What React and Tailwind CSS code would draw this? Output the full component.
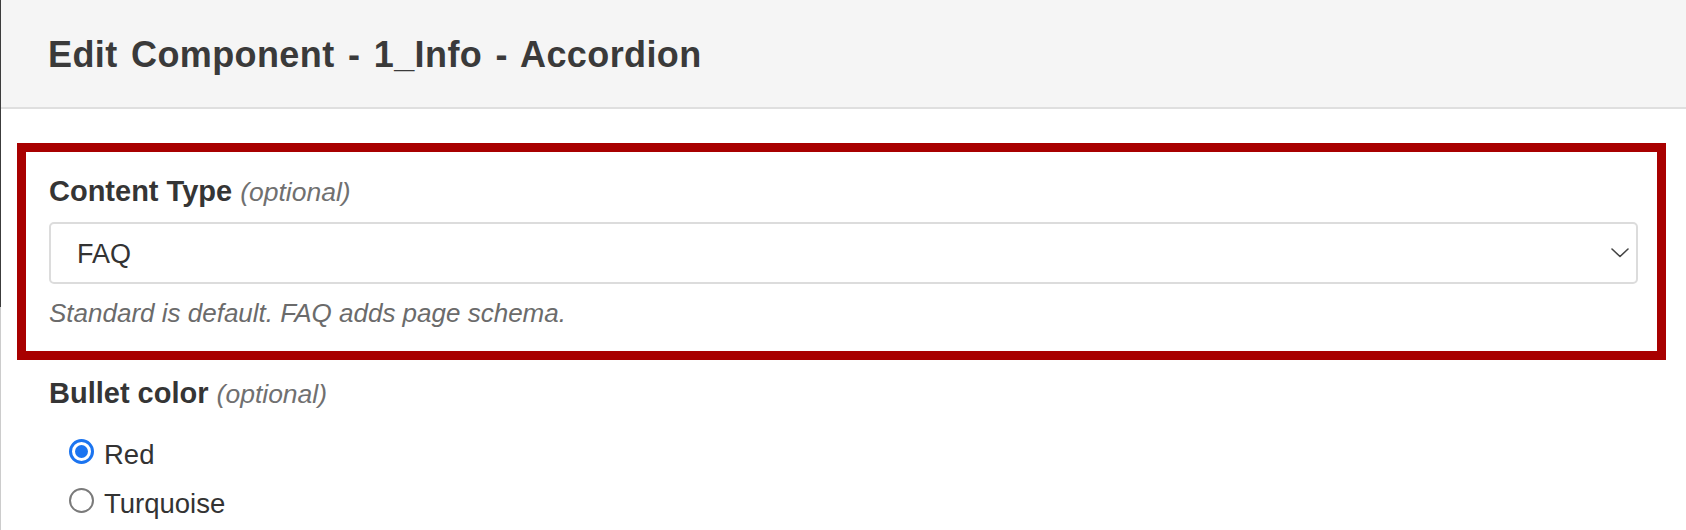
import React from 'react';

function Radio({ checked }) {
  if (checked) {
    return (
      <span className="flex items-center justify-center w-[25px] h-[25px] rounded-full border-[3px] border-[#1b74f0] bg-white shrink-0">
        <span className="w-[13px] h-[13px] rounded-full bg-[#1b74f0]" />
      </span>
    );
  }
  return <span className="w-[25px] h-[25px] rounded-full border-2 border-[#7a7a7a] bg-white shrink-0" />;
}

export default function App() {
  const options = [
    { label: "Red", checked: true },
    { label: "Turquoise", checked: false },
  ];

  return (
    <div className="w-[1686px] h-[530px] overflow-hidden bg-white flex font-['Liberation_Sans',Arial,sans-serif] text-[#353535]">
      {/* left window edge */}
      <div className="w-px flex flex-col shrink-0">
        <div className="h-[307px] bg-[#3c3c3c]" />
        <div className="flex-1 bg-[#cccccc]" />
      </div>

      <div className="flex-1 flex flex-col">
        <div className="h-[109px] shrink-0 bg-[#f5f5f5] border-b-2 border-[#dfdfdf] flex items-center pl-[47px] pt-[2px]">
          <h1 className="text-[36px] leading-[40px] font-bold text-[#3a3a3a] tracking-[0.4px] [word-spacing:3px]">
            Edit Component - 1_Info - Accordion
          </h1>
        </div>

        <div className="mt-[34px] ml-[16px] mr-[20px] border-[9px] border-[#a80000] pt-[23px] pb-[23px] pl-[23px] pr-[19px]">
          <label className="block text-[29px] leading-[32px] font-bold text-[#353535] mb-[14px]">
            Content Type <span className="font-normal italic text-[26.5px] text-[#707070]">(optional)</span>
          </label>
          <div className="h-[62px] border-2 border-[#dcdcdc] rounded-[5px] bg-white flex items-center justify-between pl-[26px] pr-[7px]">
            <span className="text-[27px] leading-[32px] text-[#333] pt-[2px]">FAQ</span>
            <svg width="18" height="10" viewBox="0 0 18 10" fill="none">
              <polyline points="1,1 9,8.5 17,1" stroke="#444" strokeWidth="1.6" strokeLinecap="round" strokeLinejoin="round" />
            </svg>
          </div>
          <p className="mt-[14px] text-[26px] leading-[30px] italic text-[#6b6b6b]">
            Standard is default. FAQ adds page schema.
          </p>
        </div>

        <div className="pl-[48px] mt-[17px]">
          <label className="block text-[29px] leading-[32px] font-bold text-[#353535]">
            Bullet color <span className="font-normal italic text-[26.5px] text-[#707070]">(optional)</span>
          </label>
          <div className="mt-[17px] flex flex-col">
            {options.map((o) => (
              <div key={o.label} className="h-[49px] flex items-center gap-[10px] pl-[20px]">
                <Radio checked={o.checked} />
                <span className="text-[27.5px] leading-[32px] text-[#333] mt-[6px]">{o.label}</span>
              </div>
            ))}
          </div>
        </div>
      </div>
    </div>
  );
}
